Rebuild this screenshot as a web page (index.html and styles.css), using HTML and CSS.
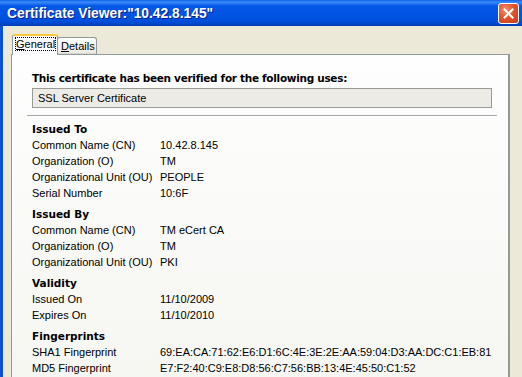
FILE: index.html
```html
<!DOCTYPE html>
<html>
<head>
<meta charset="utf-8">
<link rel="stylesheet" href="styles.css">
</head>
<body>
<div class="window">
  <div class="titlebar">
    <span class="title">Certificate Viewer:"10.42.8.145"</span>
    <span class="close"><svg width="13" height="13" viewBox="0 0 13 13"><path d="M2.5 2.5 L10.5 10.5 M10.5 2.5 L2.5 10.5" stroke="#fff" stroke-width="2" stroke-linecap="square"/></svg></span>
  </div>
  <div class="frame">
    <div class="body">
      <div class="tabs">
        <div class="tab active"><span class="focus"><u>G</u>eneral</span></div>
        <div class="tab"><u>D</u>etails</div>
      </div>
      <div class="panel">
        <div class="heading">This certificate has been verified for the following uses:</div>
        <div class="uses">SSL Server Certificate</div>
        <div class="sep"></div>
        <div class="section">
          <div class="sh">Issued To</div>
          <div class="row"><span class="lbl">Common Name (CN)</span><span>10.42.8.145</span></div>
          <div class="row"><span class="lbl">Organization (O)</span><span>TM</span></div>
          <div class="row"><span class="lbl">Organizational Unit (OU)</span><span>PEOPLE</span></div>
          <div class="row"><span class="lbl">Serial Number</span><span>10:6F</span></div>
        </div>
        <div class="section">
          <div class="sh">Issued By</div>
          <div class="row"><span class="lbl">Common Name (CN)</span><span>TM eCert CA</span></div>
          <div class="row"><span class="lbl">Organization (O)</span><span>TM</span></div>
          <div class="row"><span class="lbl">Organizational Unit (OU)</span><span>PKI</span></div>
        </div>
        <div class="section">
          <div class="sh">Validity</div>
          <div class="row"><span class="lbl">Issued On</span><span>11/10/2009</span></div>
          <div class="row"><span class="lbl">Expires On</span><span>11/10/2010</span></div>
        </div>
        <div class="section">
          <div class="sh">Fingerprints</div>
          <div class="row"><span class="lbl">SHA1 Fingerprint</span><span>69:EA:CA:71:62:E6:D1:6C:4E:3E:2E:AA:59:04:D3:AA:DC:C1:EB:81</span></div>
          <div class="row"><span class="lbl">MD5 Fingerprint</span><span>E7:F2:40:C9:E8:D8:56:C7:56:BB:13:4E:45:50:C1:52</span></div>
        </div>
      </div>
    </div>
  </div>
</div>
</body>
</html>
```
FILE: styles.css
```css
html, body {
  margin: 0;
  padding: 0;
  width: 522px;
  height: 377px;
  overflow: hidden;
}
.window {
  width: 522px;
  height: 377px;
  display: flex;
  flex-direction: column;
  font-family: "Liberation Sans", Arial, sans-serif;
  font-size: 11px;
  color: #000;
}
.titlebar {
  height: 26px;
  flex: none;
  box-sizing: border-box;
  padding: 0 3px 0 7px;
  display: flex;
  align-items: center;
  justify-content: space-between;
  background: linear-gradient(to bottom, #0A5FE8 0%, #3D8CF8 8%, #0758E6 22%, #0054E3 50%, #0050DC 80%, #0047C8 92%, #003CB0 100%);
}
.title {
  color: #fff;
  font-family: "Liberation Sans", Arial, sans-serif;
  font-weight: bold;
  font-size: 13.8px;
  text-shadow: 1px 1px 0 #0A1E8C;
  margin-top: 1px;
}
.close {
  width: 21px;
  height: 21px;
  box-sizing: border-box;
  border: 1px solid #fff;
  border-radius: 3px;
  background: radial-gradient(circle at 35% 30%, #F08E6E 0%, #E2552E 45%, #C8381A 100%);
  display: flex;
  align-items: center;
  justify-content: center;
  margin-top: 1px;
}
.frame {
  flex: 1;
  display: flex;
  border-left: 3px solid #0A4FD8;
  background: #ECE9D8;
}
.body {
  flex: 1;
  padding: 8px 0 0 8px;
  display: flex;
  flex-direction: column;
}
.tabs {
  display: flex;
  align-items: flex-end;
  padding-left: 1px;
  height: 20px;
  position: relative;
  z-index: 1;
}
.tab {
  width: 40px;
  height: 17px;
  box-sizing: border-box;
  padding: 2px 0 0 3px;
  border: 1px solid #919B9C;
  border-bottom: none;
  border-radius: 3px 3px 0 0;
  background: linear-gradient(to bottom, #FFFFFF, #ECEBE6 90%, #D6D0C5);
  line-height: 13px;
}
.tab.active {
  width: 46px;
  height: 21px;
  margin-bottom: -1px;
  border-top: 2px solid #FFC83C;
  background: #FCFCFE;
  padding: 2px 0 0 3px;
  margin-right: -1px;
}
.focus {
  outline: 1px dotted #000;
  outline-offset: 0px;
}
u {
  text-decoration: underline;
}
.panel {
  width: 499px;
  flex: 1;
  box-sizing: border-box;
  border: 1px solid #919B9C;
  border-right: 2px solid #919B9C;
  border-bottom: none;
  background: linear-gradient(to bottom, #FEFEFE, #F6F6F2);
  padding: 16px 0 0 20px;
}
.heading {
  font-family: "DejaVu Sans", Verdana, sans-serif;
  font-weight: bold;
  font-size: 10.5px;
  letter-spacing: -0.3px;
  height: 14px;
  line-height: 14px;
}
.uses {
  margin-top: 3px;
  width: 460px;
  height: 20px;
  box-sizing: border-box;
  border: 1px solid #9A9A96;
  background: #ECEBE6;
  padding-left: 5px;
  line-height: 18px;
}
.sep {
  margin: 7px 0 0 -5px;
  width: 470px;
  height: 1px;
  background: #A7A6AA;
  border-bottom: 1px solid #FFFFFF;
}
.section {
  margin-top: 5px;
}
.sep + .section {
  margin-top: 4px;
}
.sh {
  font-family: "DejaVu Sans", Verdana, sans-serif;
  font-weight: bold;
  font-size: 10.5px;
  line-height: 16px;
  height: 16px;
}
.row {
  display: flex;
  line-height: 16px;
  height: 16px;
}
.lbl {
  width: 128px;
  flex: none;
}
```
